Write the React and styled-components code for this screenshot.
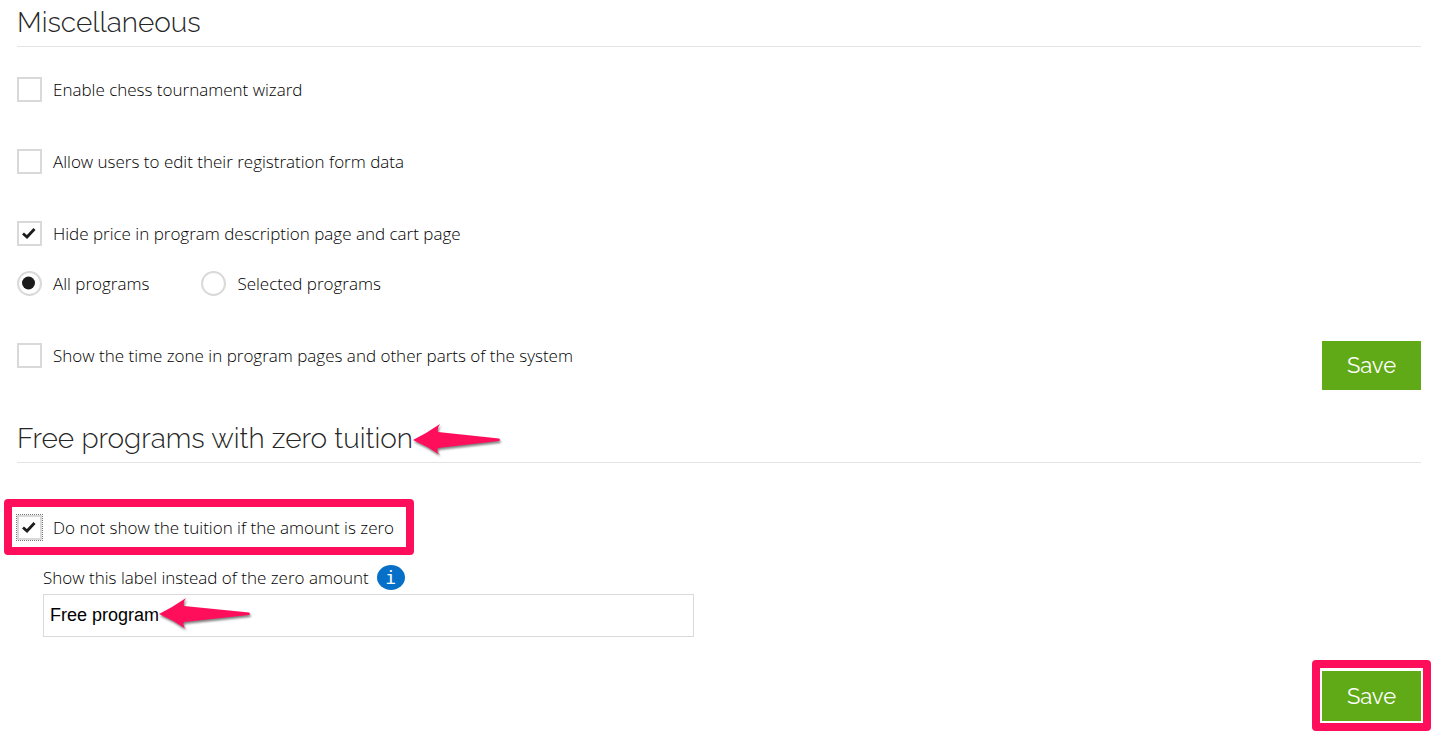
import React from "react";
import styled, { createGlobalStyle } from "styled-components";

const GlobalStyle = createGlobalStyle`
  *, *::before, *::after { box-sizing: border-box; }
  body {
    margin: 0;
    background: #fff;
    color: #000;
    font: 300 17px/25px "Segoe UI", "Open Sans", sans-serif;
  }
`;

const accent = "#ff0f5b";

const Page = styled.main`
  padding: 0 20px 16px 17px;
`;

const Section = styled.section`
  & + & { margin-top: 26px; }
`;

const Heading = styled.h2`
  margin: 0;
  padding: 6px 0;
  border-bottom: 1px solid #e3e3e3;
  color: #262626;
  font: 300 28px/34px Raleway, Lato, sans-serif;
`;

const Anchor = styled.span`
  position: relative;
  display: inline-block;
`;

const Rows = styled.div`
  display: flex;
  flex-direction: column;
  align-items: flex-start;
  gap: ${(p) => p.$gap}px;
  padding-top: ${(p) => p.$top}px;
`;

const Option = styled.label`
  display: inline-flex;
  align-items: center;
  gap: 11px;
  height: 25px;
  cursor: pointer;
`;

const Tick = styled.input`
  appearance: none;
  flex: none;
  display: grid;
  place-items: center;
  width: 25px;
  height: 25px;
  margin: 0;
  border: 2px solid #d9d9d9;
  border-radius: ${(p) => (p.type === "radio" ? "50%" : "0")};
  background: #fff;
  outline: ${(p) => (p.$focused ? "1px dotted #777" : "none")};
`;

const Box = styled.span`
  position: relative;
  display: inline-flex;
`;

const Mark = styled.svg`
  position: absolute;
  inset: 0;
  width: 25px;
  height: 25px;
  pointer-events: none;
  visibility: hidden;
  input:checked + & { visibility: visible; }
`;

const RadioGroup = styled.div`
  display: flex;
  gap: 52px;
`;

const Footer = styled.div`
  display: flex;
  justify-content: ${(p) => (p.$end ? "flex-end" : "space-between")};
  align-items: flex-start;
  margin-top: ${(p) => p.$top}px;
`;

const FooterOption = styled.div`
  display: flex;
  padding-top: 2px;
`;

const SaveButton = styled.button`
  min-width: 99px;
  height: ${(p) => (p.$marked ? 50 : 49)}px;
  padding: 0 24px 1px;
  border: 0;
  background: #60aa17;
  color: #fff;
  font: 400 22px/26px Raleway, Lato, sans-serif;
  cursor: pointer;
`;

const Highlight = styled.div`
  position: relative;
  display: inline-flex;
  &::after {
    content: "";
    position: absolute;
    inset: ${(p) => p.$inset};
    border: 8px solid ${accent};
    border-radius: 4px;
    pointer-events: none;
  }
`;

const Field = styled.div`
  align-self: stretch;
  padding-left: 26px;
`;

const FieldLabel = styled.div`
  display: flex;
  align-items: center;
  gap: 8px;
  height: 25px;
  margin-bottom: 4px;
`;

const InfoButton = styled.button`
  width: 28px;
  height: 25px;
  padding: 1px 0 0;
  border: 0;
  border-radius: 50%;
  background: #0670c8;
  color: #fff;
  font: 18px/24px "DejaVu Sans Mono", monospace;
`;

const InputWrap = styled.div`
  position: relative;
  max-width: 651px;
`;

const TextInput = styled.input`
  display: block;
  width: 100%;
  height: 43px;
  padding: 0 6px;
  border: 1px solid #d9d9d9;
  background: #fff;
  color: #000;
  font: 18px/22px "Liberation Sans", Arial, sans-serif;
`;

const ArrowSvg = styled.svg`
  position: absolute;
  left: ${(p) => p.$left};
  top: ${(p) => p.$top}px;
  overflow: visible;
  filter: drop-shadow(1px 2px 1px rgba(0, 0, 0, 0.5));
  pointer-events: none;
`;

function Arrow({ left, top, length }) {
  return (
    <ArrowSvg $left={left} $top={top} width={length} height="32" aria-hidden="true">
      <path
        fill={accent}
        d={`M0 16 Q14 9 27 0 Q24 4 25 8 L${length - 1} 14.5 Q${length + 1} 16 ${length - 1} 17 L25 24 Q23 28 27 31 Q14 22 0 16Z`}
      />
    </ArrowSvg>
  );
}

function Choice({ type = "checkbox", children, focused, ...rest }) {
  return (
    <Option>
      <Box>
        <Tick type={type} $focused={focused} {...rest} />
        <Mark viewBox="0 0 25 25" aria-hidden="true">
          {type === "radio" ? (
            <circle cx="11.5" cy="12" r="6.5" fill="#1c1c1c" />
          ) : (
            <path d="M6 12.5 L10 16 L17.5 8" fill="none" stroke="#1c1c1c" strokeWidth="2.8" />
          )}
        </Mark>
      </Box>
      {children}
    </Option>
  );
}

export default function App() {
  return (
    <Page>
      <GlobalStyle />
      <Section>
        <Heading>Miscellaneous</Heading>
        <Rows $top={30} $gap={47}>
          <Choice>Enable chess tournament wizard</Choice>
          <Choice>Allow users to edit their registration form data</Choice>
          <Choice defaultChecked>Hide price in program description page and cart page</Choice>
        </Rows>
        <Rows $top={25} $gap={0}>
          <RadioGroup role="radiogroup" aria-label="Programs">
            <Choice type="radio" name="programs" defaultChecked>All programs</Choice>
            <Choice type="radio" name="programs">Selected programs</Choice>
          </RadioGroup>
        </Rows>
        <Footer $top={45}>
          <FooterOption>
            <Choice>Show the time zone in program pages and other parts of the system</Choice>
          </FooterOption>
          <SaveButton type="button">Save</SaveButton>
        </Footer>
      </Section>
      <Section>
        <Heading>
          <Anchor>
            Free programs with zero tuition
            <Arrow left="100%" top={2} length={87} />
          </Anchor>
        </Heading>
        <Rows $top={52} $gap={25}>
          <Highlight $inset="-16px -20px -15px -13px">
            <Choice focused defaultChecked>Do not show the tuition if the amount is zero</Choice>
          </Highlight>
          <Field>
            <FieldLabel>
              <label htmlFor="zero-label">Show this label instead of the zero amount</label>
              <InfoButton type="button" aria-label="More information">i</InfoButton>
            </FieldLabel>
            <InputWrap>
              <TextInput id="zero-label" type="text" defaultValue="Free program" />
              <Arrow left="116px" top={4} length={91} />
            </InputWrap>
          </Field>
        </Rows>
        <Footer $end $top={34}>
          <Highlight $inset="-11px -10px -10px -10px">
            <SaveButton type="button" $marked>Save</SaveButton>
          </Highlight>
        </Footer>
      </Section>
    </Page>
  );
}
